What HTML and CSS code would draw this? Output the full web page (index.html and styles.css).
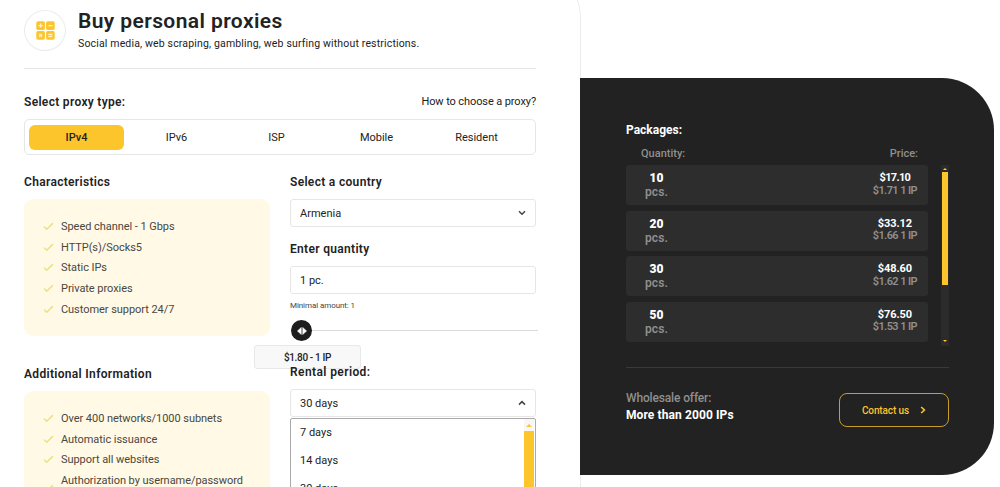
FILE: index.html
```html
<!DOCTYPE html>
<html lang="en">
<head>
    <meta charset="UTF-8">
    <meta name="viewport" content="width=device-width, initial-scale=1.0">
    <title>Buy personal proxies</title>
    <link rel="stylesheet" href="styles.css">
</head>
<body>
    <svg class="sprite" width="0" height="0">
        <symbol id="check" viewBox="0 0 12 10">
            <path d="M1.5 5.6 4 8 10.4 1.8" fill="none" stroke="#e9e184" stroke-width="1.6" stroke-linecap="round" stroke-linejoin="round"/>
        </symbol>
    </svg>

    <div class="page">
        <main class="order">
            <header class="order-header">
                <div class="logo">
                    <svg width="19" height="19" viewBox="0 0 19 19">
                        <g fill="#fdc52c">
                            <rect x="0.3" y="0.3" width="8.6" height="8.6" rx="1.6"/>
                            <rect x="10.1" y="0.3" width="8.6" height="8.6" rx="1.6"/>
                            <rect x="0.3" y="10.1" width="8.6" height="8.6" rx="1.6"/>
                            <rect x="10.1" y="10.1" width="8.6" height="8.6" rx="1.6"/>
                        </g>
                        <g stroke="#fff3d0" stroke-width="1.3" fill="none">
                            <path d="M2.6 4.6h4M4.6 2.6v4M12.4 4.6h4M3.2 13l2.8 2.8M6 13l-2.8 2.8M12.4 13.4h4M12.4 15.5h4"/>
                        </g>
                    </svg>
                </div>
                <div>
                    <h1>Buy personal proxies</h1>
                    <p class="subtitle">Social media, web scraping, gambling, web surfing without restrictions.</p>
                </div>
            </header>

            <div class="type-head">
                <h2 class="type-title">Select proxy type:</h2>
                <a class="help">How to choose a proxy?</a>
            </div>
            <nav class="tabs">
                <a class="tab active">IPv4</a>
                <a class="tab">IPv6</a>
                <a class="tab">ISP</a>
                <a class="tab">Mobile</a>
                <a class="tab">Resident</a>
            </nav>

            <div class="columns">
                <section class="info">
                    <h2>Characteristics</h2>
                    <ul class="features">
                        <li><svg><use href="#check"/></svg>Speed channel - 1 Gbps</li>
                        <li><svg><use href="#check"/></svg>HTTP(s)/Socks5</li>
                        <li><svg><use href="#check"/></svg>Static IPs</li>
                        <li><svg><use href="#check"/></svg>Private proxies</li>
                        <li><svg><use href="#check"/></svg>Customer support 24/7</li>
                    </ul>
                    <h2 class="additional">Additional Information</h2>
                    <ul class="features">
                        <li><svg><use href="#check"/></svg>Over 400 networks/1000 subnets</li>
                        <li><svg><use href="#check"/></svg>Automatic issuance</li>
                        <li><svg><use href="#check"/></svg>Support all websites</li>
                        <li class="two-lines"><svg><use href="#check"/></svg>Authorization by username/password</li>
                    </ul>
                </section>

                <section class="fields">
                    <h2>Select a country</h2>
                    <div class="control">
                        <span>Armenia</span>
                        <svg width="8" height="6" viewBox="0 0 8 6"><path d="M1 1.2 4 4.2 7 1.2"/></svg>
                    </div>
                    <h2 class="quantity-title">Enter quantity</h2>
                    <div class="control"><span>1 pc.</span></div>
                    <p class="minimal">Minimal amount: 1</p>
                    <div class="slider">
                        <div class="knob">
                            <svg width="10" height="8" viewBox="0 0 10 8"><path d="M4.3 0.4v7.2L0.4 4zM5.7 0.4v7.2L9.6 4z" fill="#fff" stroke="#fff" stroke-width="0.5" stroke-linejoin="round"/></svg>
                        </div>
                        <div class="track"></div>
                        <div class="tooltip">$1.80 - 1 IP</div>
                    </div>
                    <h2 class="rental-title">Rental period:</h2>
                    <div class="control rental">
                        <span>30 days</span>
                        <svg width="8" height="6" viewBox="0 0 8 6"><path d="M1 4.6 4 1.6 7 4.6"/></svg>
                    </div>
                    <div class="dropdown">
                        <div class="options">
                            <div>7 days</div>
                            <div>14 days</div>
                            <div>30 days</div>
                        </div>
                        <div class="bar">
                            <svg width="6" height="3" viewBox="0 0 6 3"><path d="M0 3 3 0 6 3z" fill="#fdc52c"/></svg>
                            <div class="thumb"></div>
                        </div>
                    </div>
                </section>
            </div>
        </main>

        <aside class="packages">
            <h2>Packages:</h2>
            <div class="packages-head">
                <span>Quantity:</span>
                <span>Price:</span>
            </div>
            <div class="packages-body">
                <div class="rows">
                    <div class="row">
                        <div class="qty"><b>10</b><span>pcs.</span></div>
                        <div class="price"><b class="tight">$17.10</b><span>$1.71 1 IP</span></div>
                    </div>
                    <div class="row">
                        <div class="qty"><b>20</b><span>pcs.</span></div>
                        <div class="price"><b>$33.12</b><span>$1.66 1 IP</span></div>
                    </div>
                    <div class="row">
                        <div class="qty"><b>30</b><span>pcs.</span></div>
                        <div class="price"><b>$48.60</b><span>$1.62 1 IP</span></div>
                    </div>
                    <div class="row">
                        <div class="qty"><b>50</b><span>pcs.</span></div>
                        <div class="price"><b>$76.50</b><span>$1.53 1 IP</span></div>
                    </div>
                </div>
                <div class="scroll">
                    <svg width="4" height="2" viewBox="0 0 4 2"><path d="M0 2 2 0 4 2z" fill="#fdc52c"/></svg>
                    <div class="scroll-thumb"></div>
                    <svg width="4" height="2" viewBox="0 0 4 2"><path d="M0 0 2 2 4 0z" fill="#fdc52c"/></svg>
                </div>
            </div>
            <div class="wholesale">
                <div>
                    <p class="offer">Wholesale offer:</p>
                    <p class="more">More than 2000 IPs</p>
                </div>
                <a class="contact">Contact us
                    <svg width="6" height="8" viewBox="0 0 6 8"><path d="M1.2 1 4.4 4 1.2 7" fill="none" stroke="#fdc52c" stroke-width="1.6"/></svg>
                </a>
            </div>
        </aside>
    </div>
</body>
</html>
```

FILE: styles.css
```css
* {
    box-sizing: border-box;
}
body {
    margin: 0;
    height: 487px;
    overflow: hidden;
    background-color: #fff;
    color: #222;
    font-family: Roboto, "Liberation Sans", sans-serif;
    font-size: 11px;
    font-weight: 500;
}
h1, h2, p, ul {
    margin: 0;
    padding: 0;
}
h2 {
    font-size: 12px;
    font-weight: 600;
    line-height: 16px;
    letter-spacing: 0.32px;
}
.sprite {
    display: block;
}
.page {
    display: flex;
    align-items: flex-start;
    height: 487px;
    overflow: hidden;
}

/* order form */
.order {
    width: 581px;
    height: 520px;
    margin-top: -33px;
    padding: 33px 44px 0 24px;
    border-right: 1px solid #ececec;
    border-top-right-radius: 50px;
}
.order-header {
    display: flex;
    gap: 12px;
    height: 69px;
    padding-top: 10px;
    border-bottom: 1px solid #e6e6e6;
}
.logo {
    display: flex;
    align-items: center;
    justify-content: center;
    width: 42px;
    height: 41px;
    border: 1px solid #ebebeb;
    border-radius: 50%;
}
h1 {
    margin-top: -1px;
    font-size: 21px;
    font-weight: 600;
    line-height: 24px;
    letter-spacing: 0.4px;
}
.subtitle {
    margin-top: 3px;
    font-size: 10.5px;
    font-weight: 400;
    line-height: 16px;
    letter-spacing: 0.16px;
}
.type-head {
    display: flex;
    justify-content: space-between;
    margin-top: 25px;
    line-height: 16px;
}
.help {
    font-size: 11px;
    font-weight: 400;
    letter-spacing: -0.1px;
}
.tabs {
    display: flex;
    align-items: center;
    gap: 5px;
    height: 36px;
    margin-top: 9px;
    padding: 0 4px;
    border: 1px solid #e6e6e6;
    border-radius: 5px;
}
.tab {
    width: 95px;
    height: 25px;
    line-height: 25px;
    border-radius: 6px;
    text-align: center;
    font-weight: 400;
}
.tab.active {
    background-color: #fdc52c;
    font-weight: 500;
}
.columns {
    display: flex;
    gap: 20px;
    margin-top: 19px;
}
.info,
.fields {
    width: 246px;
}
.features {
    height: 137px;
    margin-top: 9px;
    padding: 17px 19px;
    border-radius: 9px;
    background-color: #fff9e6;
    list-style: none;
}
.features li {
    display: flex;
    align-items: center;
    height: 20.8px;
    color: #4a473e;
    font-weight: 400;
    letter-spacing: -0.05px;
    white-space: nowrap;
}
.features svg {
    width: 11px;
    height: 9px;
    margin-right: 7px;
}
.features .two-lines svg {
    position: relative;
    top: 8px;
}
.additional {
    margin-top: 30px;
}
.control {
    display: flex;
    align-items: center;
    justify-content: space-between;
    height: 28px;
    margin-top: 9px;
    padding: 0 9px;
    border: 1px solid #e6e6e6;
    border-radius: 3px;
    font-weight: 400;
}
.control path {
    fill: none;
    stroke: #444;
    stroke-width: 1.5;
}
.quantity-title {
    margin-top: 14px;
}
.minimal {
    margin-top: 6px;
    font-size: 8px;
    font-weight: 400;
    line-height: 11px;
    letter-spacing: -0.08px;
    color: #444;
}
.slider {
    position: relative;
    display: flex;
    align-items: center;
    width: 248px;
    height: 21px;
    margin-top: 9px;
    padding-left: 1px;
}
.knob {
    display: flex;
    align-items: center;
    justify-content: center;
    width: 21px;
    height: 21px;
    border-radius: 50%;
    background-color: #1d1d1d;
}
.track {
    flex: 1;
    height: 1px;
    background-color: #dadada;
}
.tooltip {
    position: absolute;
    left: -36px;
    top: 25px;
    width: 107px;
    height: 24px;
    border: 1px solid #e8e8e8;
    border-radius: 3px;
    background-color: #f8f8f8;
    font-size: 10px;
    line-height: 23px;
    letter-spacing: -0.35px;
    text-align: center;
}
/* keeps the heading above the tooltip */
.rental-title {
    position: relative;
    margin-top: 23px;
    letter-spacing: 0.4px;
}
.dropdown {
    display: flex;
    justify-content: space-between;
    height: 90px;
    margin-top: 1px;
    border: 1px solid #aaa;
    border-radius: 2px;
    font-weight: 400;
}
.options {
    padding-left: 9px;
    line-height: 28px;
}
.bar {
    width: 10px;
    margin-right: 1px;
    background-color: #f7f7f7;
    text-align: center;
    line-height: 0;
}
.bar svg {
    margin: 5px 0 4px;
}
.thumb {
    height: 70px;
    background-color: #fdc52c;
}

/* packages */
.packages {
    width: 414px;
    height: 397px;
    margin-top: 78px;
    margin-left: -1px;
    padding: 44px 45px 0 46px;
    border-radius: 0 52px 52px 0;
    background-color: #222;
    color: #fff;
}
.packages h2 {
    font-weight: 700;
    letter-spacing: 0;
}
.packages-head {
    display: flex;
    justify-content: space-between;
    padding: 8px 31px 0 15px;
    color: #8f8f8f;
    line-height: 16px;
}
.packages-body {
    display: flex;
    align-items: flex-start;
    justify-content: space-between;
    height: 182px;
    margin-top: 3px;
}
.rows {
    display: grid;
    gap: 5.5px;
    width: 302px;
}
.row {
    display: flex;
    justify-content: space-between;
    height: 40px;
    padding: 6px 11px 0 19px;
    border-radius: 3px;
    background-color: #2d2d2d;
}
.qty,
.price {
    display: flex;
    flex-direction: column;
    align-items: center;
    color: #8f8f8f;
    line-height: 14px;
}
.qty {
    font-size: 12px;
    font-weight: 600;
    letter-spacing: 0.1px;
}
.price {
    padding-top: 1px;
    line-height: 12.5px;
    letter-spacing: -0.1px;
}
.price span {
    font-weight: 600;
    letter-spacing: -0.6px;
}
.row b {
    color: #fff;
}
.row .tight {
    letter-spacing: -0.7px;
}
.scroll {
    display: flex;
    flex-direction: column;
    align-items: center;
    width: 8px;
    height: 181px;
    padding: 3px 0 4px;
    background-color: #2b2b2b;
}
.scroll-thumb {
    width: 6px;
    height: 113px;
    margin: 2px 0 auto;
    background-color: #fdc52c;
}
.wholesale {
    display: flex;
    justify-content: space-between;
    margin-top: 20px;
    padding-top: 22px;
    border-top: 1px solid #3a3a3a;
}
.wholesale p {
    font-size: 12px;
    line-height: 17px;
}
.wholesale .offer {
    color: #8f8f8f;
    letter-spacing: -0.15px;
}
.wholesale .more {
    font-weight: 700;
    letter-spacing: 0.1px;
}
.contact {
    display: flex;
    align-items: center;
    justify-content: center;
    gap: 11px;
    width: 110px;
    height: 34px;
    margin-top: 3px;
    border: 1px solid #c89d2c;
    border-radius: 8px;
    color: #fdc52c;
    font-size: 10px;
    letter-spacing: -0.1px;
}
```
